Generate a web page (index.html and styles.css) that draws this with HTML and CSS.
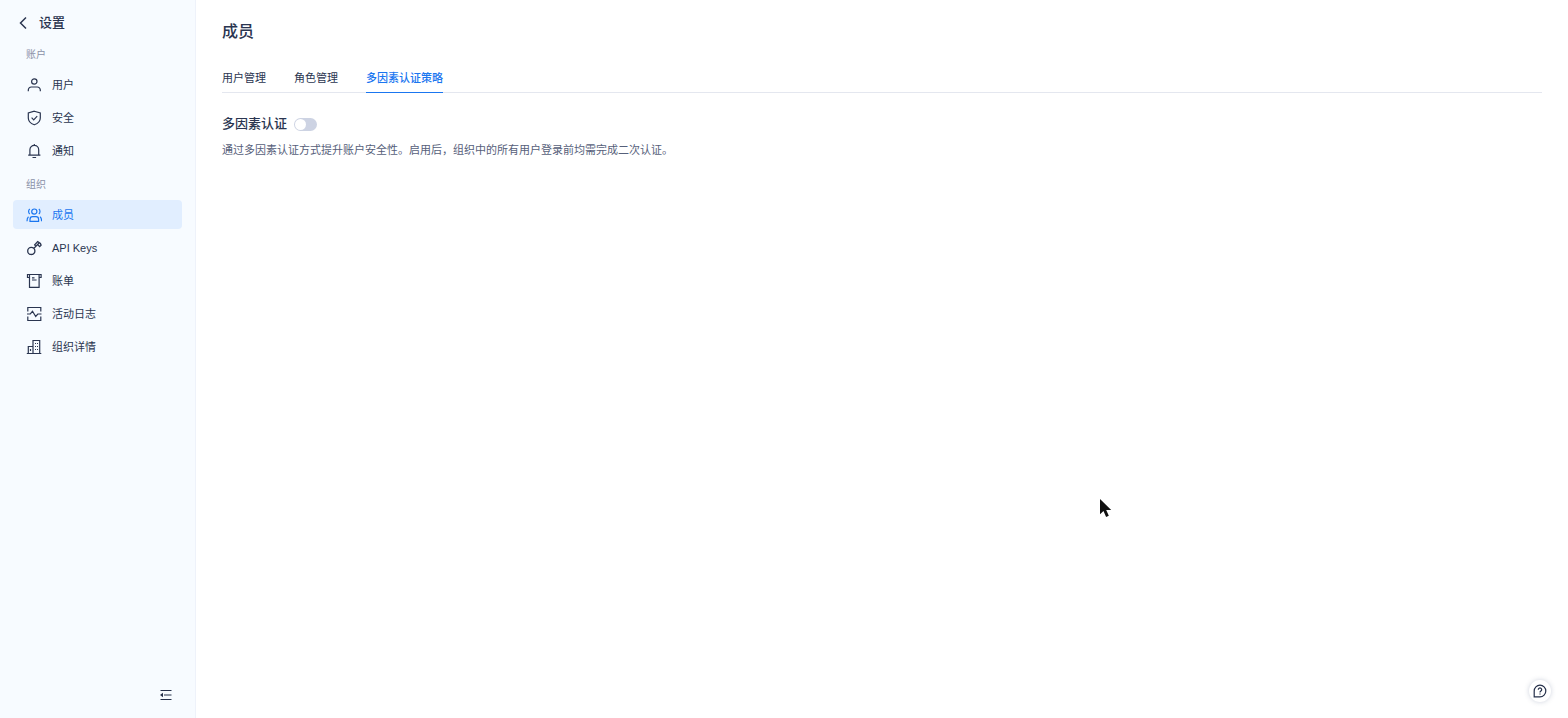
FILE: index.html
```html
<!DOCTYPE html>
<html lang="zh-CN">
<head>
<meta charset="utf-8">
<meta name="viewport" content="width=device-width, initial-scale=1">
<title>成员</title>
<link rel="stylesheet" href="styles.css">
</head>
<body>

<div class="layout">
  <aside class="sidebar">
    <a href="#" class="back">
      <svg width="16" height="16" viewBox="0 0 16 16"><path d="M11 2.500 5.500 8l5.500 5.500" stroke-width="1.500"/></svg>
      <span>设置</span>
    </a>

    <nav class="menu">
      <div class="menu-label">账户</div>
      <a href="#" class="menu-item">
        <svg width="16" height="16" viewBox="0 0 16 16"><circle cx="8.300" cy="4.500" r="2.700"/><path d="M2.300 14.300v-1.300a3 3 0 0 1 3-3h6a3 3 0 0 1 3 3v1.300"/></svg>
        <span>用户</span>
      </a>
      <a href="#" class="menu-item">
        <svg width="16" height="16" viewBox="0 0 16 16"><path d="M8.300 1.200 14.300 3v5c0 3.600-3 5.800-6 6.800-3-1-6-3.200-6-6.800V3z"/><path d="M5.600 7.700l2.100 2.100 3.500-3.600"/></svg>
        <span>安全</span>
      </a>
      <a href="#" class="menu-item">
        <svg width="16" height="16" viewBox="0 0 16 16"><path d="M8.300 1v1.400M3.900 12V6.800a4.400 4.400 0 0 1 8.800 0V12M2.200 12.200h12.200M6.500 14.500h3.600"/></svg>
        <span>通知</span>
      </a>

      <div class="menu-label">组织</div>
      <a href="#" class="menu-item active">
        <svg width="16" height="16" viewBox="0 0 16 16"><circle cx="8.300" cy="4.600" r="2.600"/><path d="M4 14.300v-1.900c0-1.700 1-2.700 2.600-2.700H10c1.600 0 2.600 1 2.600 2.700v1.900zM3.800 2C2.200 3 2.200 6 3.800 7M12.800 2c1.600 1 1.600 4 0 5M2.500 9.700C1.400 10.600 1 12 1 14.300M14.100 9.700c1.100.9 1.500 2.300 1.500 4.600"/></svg>
        <span>成员</span>
      </a>
      <a href="#" class="menu-item">
        <svg width="16" height="16" viewBox="0 0 16 16"><path d="M8.900 10.900a3.600 3.600 0 1 1-7.200 0 3.600 3.600 0 0 1 7.200 0zM7.900 8.400l5.400-5.700M9.800 6.300 8.700 4.800l3-3.200 2.700 1.800.7 1.800-1.400 1.400-1.900-1.900" stroke-width="1.300"/></svg>
        <span>API Keys</span>
      </a>
      <a href="#" class="menu-item">
        <svg width="16" height="16" viewBox="0 0 16 16"><path d="M3.500 4.500H1.500v-3h13.600v3h-2M3.500 2v12.300h9.600V2M6 4.800h2.500M6 7h4.600"/></svg>
        <span>账单</span>
      </a>
      <a href="#" class="menu-item">
        <svg width="16" height="16" viewBox="0 0 16 16"><path d="M1.800 5.500v-4h13v4M1.800 10.500v4h13v-4M1 8h3.300l2.200-2.700 3.200 5.200L11.800 8h3.700"/></svg>
        <span>活动日志</span>
      </a>
      <a href="#" class="menu-item">
        <svg width="16" height="16" viewBox="0 0 16 16"><path d="M.8 14.500h14.500M7 14.500v-13h6.700v13M2.300 14.500v-7H7M9 4.500h1M11 4.500h1M9 7.500h1M11 7.500h1M9 10.500h1M11 10.500h1M4.500 10v2"/></svg>
        <span>组织详情</span>
      </a>
    </nav>

    <button type="button" class="collapse" aria-label="收起">
      <svg width="14" height="14" viewBox="0 0 14 14"><path d="M1.500 2.500h11M5 7h7.500M1.500 11.500h11"/><path class="fill" d="M1 7l3-2.200v4.400z"/></svg>
    </button>
  </aside>

  <main class="content">
    <h1>成员</h1>
    <nav class="tabs">
      <a href="#" class="tab">用户管理</a>
      <a href="#" class="tab">角色管理</a>
      <a href="#" class="tab active">多因素认证策略</a>
    </nav>

    <div class="mfa">
      <label for="mfa">多因素认证</label>
      <input type="checkbox" id="mfa" class="switch" role="switch">
    </div>
    <p class="desc">通过多因素认证方式提升账户安全性。启用后，组织中的所有用户登录前均需完成二次认证。</p>
  </main>
</div>

<button type="button" class="help" aria-label="帮助">
  <svg width="14" height="14" viewBox="0 0 14 14"><path d="M1.200 12.800V7A5.800 5.800 0 1 1 7 12.800z"/><path d="M5.300 5.700a1.700 1.700 0 1 1 2.600 1.400c-.6.400-.9.700-.9 1.300M7 9.500v1"/></svg>
</button>

<svg class="cursor" width="12" height="19" viewBox="0 0 12 19"><path d="M0 0v15.200l3.500-3.200 2.600 6 2.700-1.200-2.600-5.700h5z"/></svg>

</body>
</html>
```
FILE: styles.css
```css
* {
    box-sizing: border-box;
}

body {
    margin: 0;
    font-family: "Liberation Sans", "Noto Sans CJK SC", sans-serif;
    font-size: 11px;
    line-height: 16px;
    color: #2a3550;
    background: #fff;
}

a {
    color: inherit;
    text-decoration: none;
}

button {
    padding: 0;
    border: none;
    background: none;
    cursor: pointer;
}

svg {
    display: block;
    flex: none;
    fill: none;
    stroke: currentColor;
    stroke-width: 1.2;
}

.layout {
    display: flex;
    min-height: 100vh;
}

/* Sidebar */
.sidebar {
    display: flex;
    flex-direction: column;
    flex: none;
    width: 196px;
    padding: 13px;
    background: #f7fbff;
    border-right: 1px solid #eef2fa;
}

.back {
    display: flex;
    align-items: center;
    gap: 8px;
    height: 20px;
    margin-bottom: 6px;
    padding-left: 2px;
    font-size: 13px;
    font-weight: 500;
}

.menu {
    display: flex;
    flex-direction: column;
    gap: 4px;
    flex: 1;
}

.menu-label {
    height: 27px;
    padding: 8px 13px 0;
    font-size: 10px;
    color: #8b91a8;
}

.menu-item {
    display: flex;
    align-items: center;
    gap: 10px;
    height: 29px;
    padding: 0 13px;
    border-radius: 4px;
}

.menu-item.active {
    color: #1a76f0;
    background: #e1eeff;
}

.collapse {
    align-self: flex-end;
    margin: 0 9px 3px;
    color: #25304a;
}

.collapse .fill {
    fill: currentColor;
    stroke: none;
}

/* Main */
.content {
    flex: 1;
    padding: 21px 26px;
}

h1 {
    margin: 0;
    font-size: 16px;
    line-height: 22px;
    font-weight: 500;
}

.tabs {
    display: flex;
    gap: 28px;
    margin-top: 19px;
    border-bottom: 1px solid #e4e7ef;
}

.tab {
    padding: 8px 0 6px;
    margin-bottom: -1px;
    border-bottom: 1px solid transparent;
}

.tab.active {
    color: #1a76f0;
    font-weight: 500;
    border-color: #1a76f0;
}

.mfa {
    display: flex;
    align-items: center;
    gap: 7px;
    margin-top: 21px;
    font-size: 13px;
    line-height: 20px;
    font-weight: 500;
}

/* Toggle */
.switch {
    appearance: none;
    width: 23px;
    height: 13px;
    margin: 0;
    padding: 1px;
    border-radius: 7px;
    background: #cdd3e3;
    cursor: pointer;
}

.switch::before {
    content: "";
    display: block;
    width: 11px;
    height: 11px;
    border-radius: 50%;
    background: #fff;
}

.switch:checked {
    background: #1a76f0;
}

.switch:checked::before {
    margin-left: 10px;
}

.desc {
    margin: 8px 0 0;
    color: #56607a;
}

/* Floating help button */
.help {
    position: fixed;
    right: 17px;
    bottom: 16px;
    display: flex;
    align-items: center;
    justify-content: center;
    width: 22px;
    height: 22px;
    border-radius: 50%;
    color: #25304a;
    background: #fff;
    box-shadow: 0 0 5px rgba(60, 75, 120, 0.25);
}

.cursor {
    position: fixed;
    left: 1100px;
    top: 499px;
    fill: #111;
    stroke: none;
    pointer-events: none;
}
```
